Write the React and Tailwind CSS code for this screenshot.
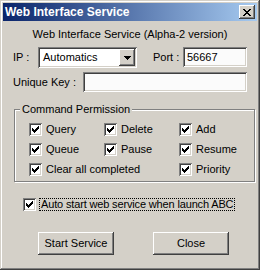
import React from "react";

const font = { fontFamily: '"Liberation Sans", Arial, sans-serif' };

function Check() {
  return (
    <svg width="7" height="7" viewBox="0 0 7 7" shapeRendering="crispEdges">
      <path
        d="M0 2h1v3h-1z M1 3h1v3h-1z M2 4h1v3h-1z M3 3h1v3h-1z M4 2h1v3h-1z M5 1h1v3h-1z M6 0h1v3h-1z"
        fill="#000"
      />
    </svg>
  );
}

function Box() {
  return (
    <span className="w-[13px] h-[13px] shrink-0 bg-white flex items-center justify-center shadow-[inset_1px_1px_0_#808080,inset_-1px_-1px_0_#ffffff,inset_2px_2px_0_#404040,inset_-2px_-2px_0_#d4d0c8]">
      <Check />
    </span>
  );
}

function CB({ label, span }) {
  return (
    <div className={"flex items-center gap-[4px] h-[13px] " + (span ? "col-span-2" : "")}>
      <Box />
      <span className="text-[11px] leading-[13px] text-black whitespace-nowrap">{label}</span>
    </div>
  );
}

function Btn({ children, w }) {
  return (
    <div className={"h-[23px] flex items-center justify-center text-[11px] text-black bg-[#d4d0c8] shadow-[inset_-1px_-1px_0_#404040,inset_1px_1px_0_#ffffff,inset_-2px_-2px_0_#808080,inset_2px_2px_0_#d4d0c8] " + w}>
      {children}
    </div>
  );
}

export default function App() {
  return (
    <div
      style={font}
      className="w-[260px] h-[270px] bg-[#d4d0c8] p-[3px] flex flex-col shadow-[inset_-1px_-1px_0_#404040,inset_1px_1px_0_#d4d0c8,inset_-2px_-2px_0_#808080,inset_2px_2px_0_#ffffff]"
    >
      {/* Title bar */}
      <div className="h-[18px] flex items-center justify-between pl-[2px] pr-[2px] bg-[linear-gradient(to_right,#0a246a,#a6caf0)]">
        <span className="text-white font-bold text-[12px] leading-[14px] whitespace-nowrap">
          Web Interface Service
        </span>
        <div className="w-[16px] h-[14px] flex items-center justify-center bg-[#d4d0c8] shadow-[inset_-1px_-1px_0_#404040,inset_1px_1px_0_#ffffff,inset_-2px_-2px_0_#808080,inset_2px_2px_0_#d4d0c8]">
          <svg width="8" height="7" viewBox="0 0 8 7" shapeRendering="crispEdges">
            <path
              d="M0 0h2v1h-2z M6 0h2v1h-2z M1 1h2v1h-2z M5 1h2v1h-2z M2 2h4v1h-4z M3 3h2v1h-2z M2 4h4v1h-4z M1 5h2v1h-2z M5 5h2v1h-2z M0 6h2v1h-2z M6 6h2v1h-2z"
              fill="#000"
            />
          </svg>
        </div>
      </div>

      {/* Subtitle */}
      <div className="mt-[6px] h-[14px] text-[11px] leading-[14px] text-black text-center whitespace-nowrap">
        Web Interface Service (Alpha-2 version)
      </div>

      {/* IP row */}
      <div className="mt-[6px] flex items-start pl-[10px] h-[21px]">
        <span className="w-[25px] h-[21px] flex items-center text-[11px] text-black">IP :</span>
        <div className="w-[99px] h-[21px] bg-white flex items-center p-[2px] shadow-[inset_1px_1px_0_#808080,inset_-1px_-1px_0_#ffffff,inset_2px_2px_0_#404040,inset_-2px_-2px_0_#d4d0c8]">
          <span className="flex-1 pl-[3px] text-[11px] text-black">Automatics</span>
          <div className="w-[16px] h-[17px] flex items-center justify-center bg-[#d4d0c8] shadow-[inset_-1px_-1px_0_#404040,inset_1px_1px_0_#ffffff,inset_-2px_-2px_0_#808080,inset_2px_2px_0_#d4d0c8]">
            <svg width="7" height="4" viewBox="0 0 7 4" shapeRendering="crispEdges">
              <path d="M0 0h7v1h-7z M1 1h5v1h-5z M2 2h3v1h-3z M3 3h1v1h-1z" fill="#000" />
            </svg>
          </div>
        </div>
        <span className="ml-[16px] w-[30px] h-[21px] flex items-center text-[11px] text-black">Port :</span>
        <div className="w-[64px] h-[20px] bg-[#fbfbfb] flex items-center pl-[4px] text-[11px] text-black shadow-[inset_1px_1px_0_#808080,inset_-1px_-1px_0_#ffffff,inset_2px_2px_0_#404040,inset_-2px_-2px_0_#d4d0c8]">
          56667
        </div>
      </div>

      {/* Unique key row */}
      <div className="mt-[4px] flex items-center pl-[10px] h-[20px]">
        <span className="w-[70px] text-[11px] text-black whitespace-nowrap">Unique Key :</span>
        <div className="w-[164px] h-[20px] bg-[#fbfbfb] shadow-[inset_1px_1px_0_#808080,inset_-1px_-1px_0_#ffffff,inset_2px_2px_0_#404040,inset_-2px_-2px_0_#d4d0c8]" />
      </div>

      {/* Group box */}
      <fieldset className="mt-[10px] ml-[11px] w-[233px] border border-[#808080] pl-0 pr-0 pt-[7px] pb-[5px] shadow-[1px_1px_0_#ffffff,inset_1px_1px_0_#ffffff]">
        <legend className="ml-[5px] px-[2px] text-[11px] leading-[14px] text-black bg-[#d4d0c8]">
          Command Permission
        </legend>
        <div className="ml-[14px] grid grid-cols-[75px_75px_75px] gap-y-[7px]">
          <CB label="Query" />
          <CB label="Delete" />
          <CB label="Add" />
          <CB label="Queue" />
          <CB label="Pause" />
          <CB label="Resume" />
          <CB label="Clear all completed" span />
          <CB label="Priority" />
        </div>
      </fieldset>

      {/* Auto start */}
      <div className="mt-[16px] ml-[20px] flex items-center gap-[3px] h-[13px]">
        <Box />
        <span className="border border-dotted border-black px-[1px] h-[13px] flex items-center text-[11px] tracking-[-0.15px] text-black whitespace-nowrap">
          Auto start web service when launch ABC
        </span>
      </div>

      {/* Buttons */}
      <div className="mt-[21px] ml-[35px] flex gap-[39px]">
        <Btn w="w-[76px]">Start Service</Btn>
        <Btn w="w-[76px]">Close</Btn>
      </div>
    </div>
  );
}
